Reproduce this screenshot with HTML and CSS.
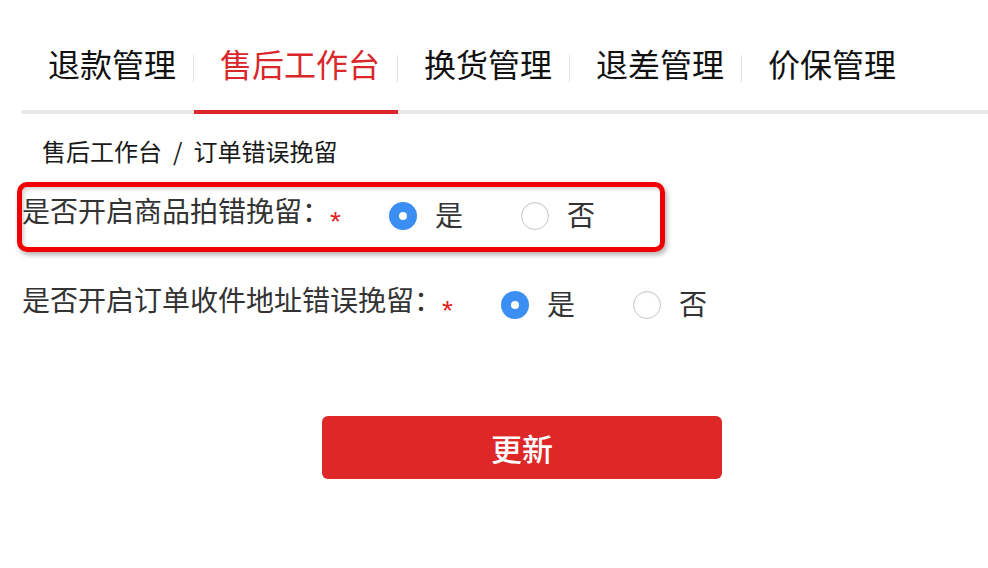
FILE: index.html
```html
<!DOCTYPE html>
<html lang="zh-CN">
<head>
<meta charset="utf-8">
<title>售后工作台</title>
<link rel="stylesheet" href="styles.css">
</head>
<body>
<div class="page">
  <nav class="tabs">
    <div class="tab">退款管理</div>
    <div class="tab active">售后工作台</div>
    <div class="tab">换货管理</div>
    <div class="tab">退差管理</div>
    <div class="tab last">价保管理</div>
  </nav>

  <div class="breadcrumb">售后工作台<span class="crumb-sep">/</span>订单错误挽留</div>

  <div class="form-row first">
    <span class="highlight"></span>
    <div class="label">是否开启商品拍错挽留：<span class="req">*</span></div>
    <div class="radios">
      <div class="option"><span class="radio checked"></span><span class="opt-text">是</span></div>
      <div class="option"><span class="radio"></span><span class="opt-text">否</span></div>
    </div>
  </div>

  <div class="form-row second">
    <div class="label">是否开启订单收件地址错误挽留：<span class="req">*</span></div>
    <div class="radios">
      <div class="option"><span class="radio checked"></span><span class="opt-text">是</span></div>
      <div class="option"><span class="radio"></span><span class="opt-text">否</span></div>
    </div>
  </div>

  <div class="actions">
    <button class="btn-update">更新</button>
  </div>
</div>
</body>
</html>
```
FILE: styles.css
```css
html, body {
  margin: 0;
  padding: 0;
  background: #ffffff;
}

body {
  font-family: "Noto Sans CJK SC", "Noto Sans", sans-serif;
  color: #333;
}

.page {
  padding-left: 22px;
}

.tabs {
  display: flex;
  border-bottom: 4px solid #e8e8e8;
}

.tab {
  position: relative;
  padding: 43px 18px 27px 26px;
  font-size: 32px;
  line-height: 40px;
  color: #111;
  border-bottom: 4px solid transparent;
  margin-bottom: -4px;
  white-space: nowrap;
}

.tab::after {
  content: "";
  position: absolute;
  right: 0;
  top: 55px;
  width: 1px;
  height: 27px;
  background: #e2e2e2;
}

.tab.last::after {
  display: none;
}

.tab.active {
  color: #d9272c;
  border-bottom-color: #d9272c;
}

.breadcrumb {
  margin: 21px 0 0 20px;
  font-size: 24px;
  line-height: 32px;
  color: #1a1a1a;
}

.crumb-sep {
  margin: 0 11px 0 11px;
}

.form-row {
  position: relative;
  display: flex;
  align-items: center;
  height: 56px;
}

.form-row.first {
  margin-top: 21px;
}

.form-row.second {
  margin-top: 33px;
}

.highlight {
  position: absolute;
  left: -5px;
  top: -6px;
  width: 638px;
  height: 60px;
  border: 5px solid #f00000;
  border-radius: 10px;
  box-shadow: 2px 3px 5px rgba(0, 0, 0, 0.3), inset 2px 2px 4px rgba(0, 0, 0, 0.18);
  pointer-events: none;
}

.label {
  font-size: 28px;
  line-height: 40px;
  color: #333;
  white-space: nowrap;
}

.req {
  font-family: "Liberation Sans", sans-serif;
  color: #e02020;
  font-size: 28px;
  vertical-align: -9px;
}

.radios {
  display: flex;
  align-items: center;
  margin-left: 48px;
}

.option {
  display: flex;
  align-items: center;
  margin-right: 58px;
}

.radio {
  box-sizing: border-box;
  width: 28px;
  height: 28px;
  border-radius: 50%;
  border: 1.5px solid #c6c6c6;
  background: #fff;
  box-shadow: inset 0 1px 2px rgba(0, 0, 0, 0.06);
  margin-right: 18px;
  display: flex;
  align-items: center;
  justify-content: center;
}

.radio.checked {
  border: none;
  background: #3b8ef2;
  box-shadow: none;
}

.radio.checked::after {
  content: "";
  width: 8px;
  height: 8px;
  border-radius: 50%;
  background: #fff;
}

.opt-text {
  font-size: 28px;
  line-height: 36px;
  padding-bottom: 4px;
  color: #333;
}

.actions {
  margin-top: 83px;
  padding-left: 300px;
}

.btn-update {
  width: 400px;
  height: 63px;
  border: none;
  border-radius: 6px;
  background: #de2727;
  color: #fff;
  font-family: "Noto Sans CJK SC", "Noto Sans", sans-serif;
  font-size: 31px;
  font-weight: 500;
  padding: 0;
  cursor: pointer;
}
```
